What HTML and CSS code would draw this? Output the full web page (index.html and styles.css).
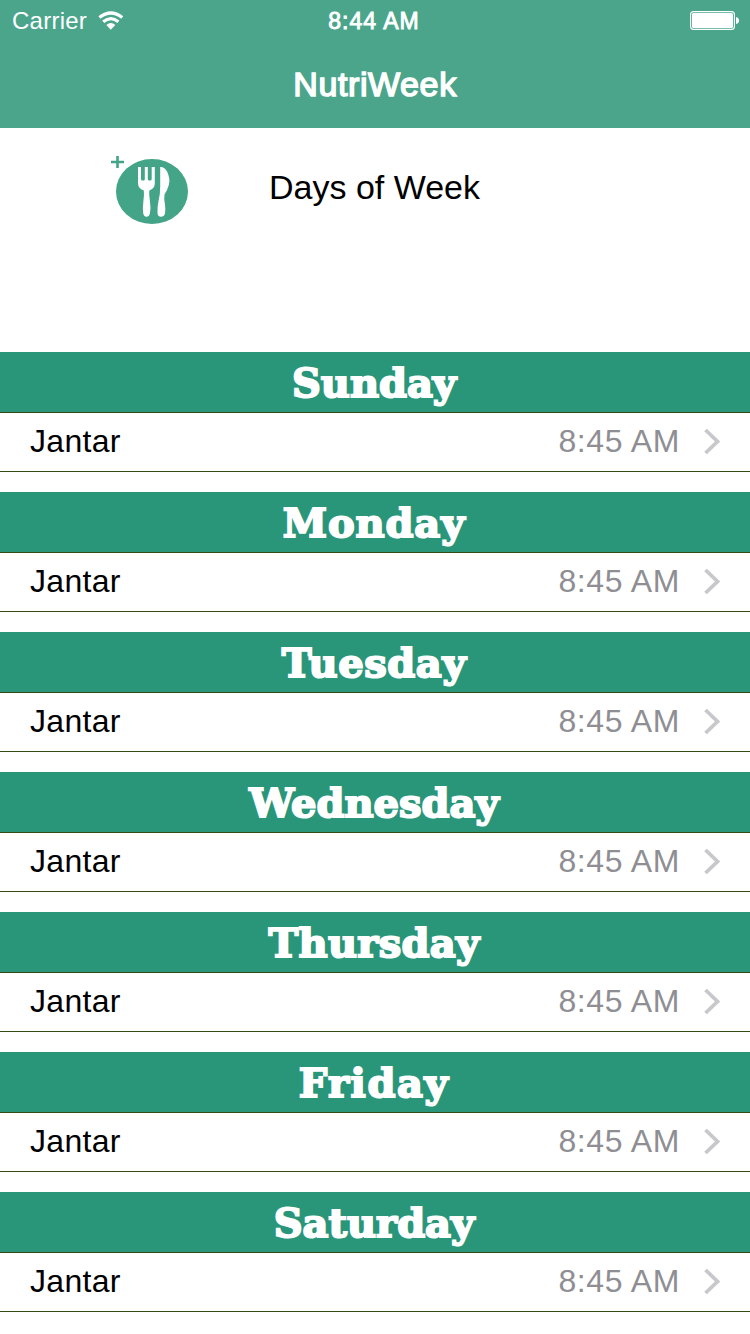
FILE: index.html
```html
<!DOCTYPE html>
<html lang="en">
<head>
<meta charset="utf-8">
<title>NutriWeek</title>
<link rel="stylesheet" href="styles.css">
</head>
<body>
<header class="top">
  <div class="status">
    <div class="carrier"><span>Carrier</span>
      <svg class="wifi" width="26" height="20" viewBox="0 0 26 20"><g fill="none" stroke="#fff" stroke-width="3.2"><path d="M1.400 6.500Q13 -2.500 24.200 6.500"/><path d="M5.200 10.800Q13 4.500 20.400 10.800"/></g><path d="M8.300 14Q13 10 17.300 14L12.800 18.800Z" fill="#fff"/></svg>
    </div>
    <div class="clock">8:44 AM</div>
    <svg class="battery" width="50" height="20" viewBox="0 0 50 20"><rect x=".6" y=".6" width="43.8" height="17.8" rx="3" fill="none" stroke="#fff" stroke-width="1.1"/><rect x="2" y="2" width="41" height="15" rx="1.500" fill="#fff"/><path d="M46 6Q49 6.500 49 9.500T46 13Z" fill="#fff"/></svg>
  </div>
  <h1 class="title">NutriWeek</h1>
</header>
<section class="intro">
  <svg class="meal" width="80" height="70" viewBox="0 0 80 70"><path d="M7.500 1V13M1 7H14" stroke="#43a488" stroke-width="2.600"/><ellipse cx="42" cy="36.500" rx="36" ry="32.500" fill="#43a488"/><path fill="#fff" d="M28 12H31V24Q31 25.500 32.500 25.500H33.500Q34.800 25.500 34.800 24V12H37.800V24Q37.800 25.500 39.200 25.500H40Q41.700 25.500 41.700 24V12H44.800V28Q44.800 33.500 39.300 35.500Q38.900 40 39.900 46Q41 53 40 58Q39.300 61.800 36.500 61.800Q33.700 61.800 33.200 58Q32.500 53 33.400 46Q34.400 40 33.800 35.500Q28 33.500 28 28Z"/><path fill="#fff" d="M50.200 12Q54.500 11.700 57.300 17Q60.500 24 58.800 30Q57.500 35 54.500 39.500Q53.800 43 54.900 49Q55.700 54 55 58.500Q54 61.800 51 61.800Q47.700 61.800 47.500 58Q47.200 52 48.500 46Q50.300 39 50.200 31Z"/></svg>
  <h2 class="subtitle">Days of Week</h2>
</section>
<main class="week">
  <section class="day"><h3 class="name sunday">Sunday</h3><div class="row"><span class="food">Jantar</span><span class="time">8:45 AM</span><svg class="arrow" width="18" height="28" viewBox="0 0 18 28"><path d="M1.500 2L13.500 13.500L1.500 25"/></svg></div></section>
  <section class="day"><h3 class="name monday">Monday</h3><div class="row"><span class="food">Jantar</span><span class="time">8:45 AM</span><svg class="arrow" width="18" height="28" viewBox="0 0 18 28"><path d="M1.500 2L13.500 13.500L1.500 25"/></svg></div></section>
  <section class="day"><h3 class="name tuesday">Tuesday</h3><div class="row"><span class="food">Jantar</span><span class="time">8:45 AM</span><svg class="arrow" width="18" height="28" viewBox="0 0 18 28"><path d="M1.500 2L13.500 13.500L1.500 25"/></svg></div></section>
  <section class="day"><h3 class="name wednesday">Wednesday</h3><div class="row"><span class="food">Jantar</span><span class="time">8:45 AM</span><svg class="arrow" width="18" height="28" viewBox="0 0 18 28"><path d="M1.500 2L13.500 13.500L1.500 25"/></svg></div></section>
  <section class="day"><h3 class="name thursday">Thursday</h3><div class="row"><span class="food">Jantar</span><span class="time">8:45 AM</span><svg class="arrow" width="18" height="28" viewBox="0 0 18 28"><path d="M1.500 2L13.500 13.500L1.500 25"/></svg></div></section>
  <section class="day"><h3 class="name friday">Friday</h3><div class="row"><span class="food">Jantar</span><span class="time">8:45 AM</span><svg class="arrow" width="18" height="28" viewBox="0 0 18 28"><path d="M1.500 2L13.500 13.500L1.500 25"/></svg></div></section>
  <section class="day"><h3 class="name saturday">Saturday</h3><div class="row"><span class="food">Jantar</span><span class="time">8:45 AM</span><svg class="arrow" width="18" height="28" viewBox="0 0 18 28"><path d="M1.500 2L13.500 13.500L1.500 25"/></svg></div></section>
</main>
</body>
</html>
```
FILE: styles.css
```css
* { box-sizing: border-box; }
body { margin: 0; width: 750px; height: 1334px; overflow: hidden; background: #fff; color: #000; font-family: "Liberation Sans", Arial, sans-serif; }
h1, h2, h3 { margin: 0; font-weight: 400; }
svg { display: block; flex: none; }
.top { height: 128px; background: #4aa58b; color: #fff; }
.status { display: grid; grid-template-columns: 1fr auto 1fr; height: 42px; padding: 0 10px 0 12px; align-items: center; font-size: 24px; line-height: 42px; }
.carrier { display: flex; align-items: center; gap: 11px; letter-spacing: .25px; }
.clock { padding-right: 4px; font-size: 23px; letter-spacing: 1px; -webkit-text-stroke: .9px #fff; }
.battery { justify-self: end; }
.title { height: 86px; line-height: 84px; text-align: center; font-size: 34px; letter-spacing: .6px; -webkit-text-stroke: 1.5px #fff; }
.intro { display: flex; height: 224px; padding: 27px 0 0 110px; }
.subtitle { margin-left: 79px; height: 64px; line-height: 64px; font-size: 34px; }
.day { height: 140px; }
.name { height: 60px; padding-right: 2px; text-align: center; background: #299679; color: #fff; font: 700 40px/62px "DejaVu Serif", serif; -webkit-text-stroke: 2px #fff; stroke-linejoin: round; }
.monday { letter-spacing: .9px; }
.tuesday { letter-spacing: .6px; }
.thursday { letter-spacing: .3px; }
.friday { letter-spacing: 1.6px; }
.row { display: flex; align-items: center; height: 60px; padding: 0 28px 0 30px; border-top: 1px solid #354b16; border-bottom: 1px solid #354b16; font-size: 32px; }
.food, .time { padding-bottom: 2px; }
.food { flex: 1; letter-spacing: .3px; }
.time { color: #8e8e93; margin-right: 24px; letter-spacing: .6px; }
.arrow path { fill: none; stroke: #c7c7cc; stroke-width: 3.800; }
```
